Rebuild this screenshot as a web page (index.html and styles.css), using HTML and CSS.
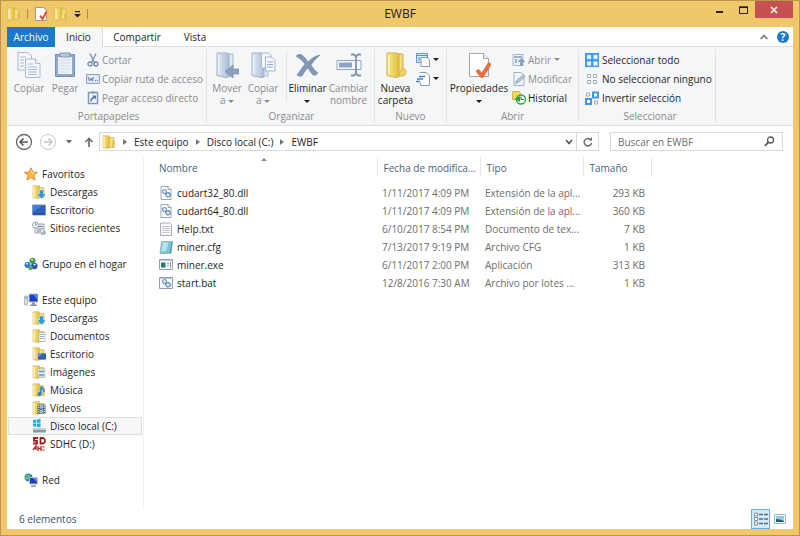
FILE: index.html
```
<!DOCTYPE html>
<html lang="es">
  <head>
    <meta charset="UTF-8" />
    <meta name="viewport" content="width=device-width, initial-scale=1.0" />
    <title>EWBF</title>
    <link rel="stylesheet" href="styles.css">
  </head>
  <body>
    <!-- Iconos compartidos -->
    <svg class="sprite" aria-hidden="true">
      <defs>
        <linearGradient id="gold" x1="0" x2="1"><stop offset="0" stop-color="#f8e994" /><stop offset="1" stop-color="#e3bd3a" /></linearGradient>
        <linearGradient id="steel" x1="0" x2="1"><stop offset="0" stop-color="#e3ebf5" /><stop offset="1" stop-color="#a9bcd6" /></linearGradient>
      </defs>
      <symbol id="folder" viewBox="0 0 14 14">
        <path d="M6 2.500h6v10H6z" fill="#f1dd82" stroke="#cdb04d" stroke-width=".6" />
        <path d="M1 .8h6.500v12l-1.500.8-5-1z" fill="url(#gold)" stroke="#d3b348" stroke-width=".6" />
        <path d="M2 2v10" stroke="#fff9d8" />
        <path d="M10.500 5.500h2v7h-2z" fill="#dcba4e" />
      </symbol>
      <symbol id="page" viewBox="0 0 14 14">
        <path d="M2 .5h7l3 3v10H2z" fill="#fff" stroke="#9aa5b1" />
        <path d="M9 .5v3h3" fill="#e8edf2" stroke="#9aa5b1" />
      </symbol>
      <symbol id="download" viewBox="0 0 14 14">
        <use href="#folder" />
        <path d="M7.500 5h4v4H14l-4.500 5L5 9h2.500z" fill="#3296dc" stroke="#fff" stroke-width=".4" />
      </symbol>
      <symbol id="gears" viewBox="0 0 14 14">
        <circle cx="5.500" cy="5.500" r="2" fill="#dce9f8" stroke="#5d86b8" stroke-width="1.200" stroke-dasharray="1.200 .3" />
        <circle cx="9" cy="8.800" r="2.200" fill="#dce9f8" stroke="#3e6aa3" stroke-width="1.200" stroke-dasharray="1.200 .3" />
      </symbol>
      <symbol id="dll" viewBox="0 0 14 14">
        <use href="#page" />
        <use href="#gears" />
      </symbol>
      <symbol id="monitor" viewBox="0 0 14 14">
        <path d="M5 1h9v8H5z" fill="#1c3fc0" stroke="#b8c3d4" />
        <path d="M9 1.500h4.500v5z" fill="#5d8bf0" />
        <path d="M8 9.500h3v2h2v1.500H6v-1.500h2z" fill="#8b97a8" />
      </symbol>
      <symbol id="big-folder" viewBox="0 0 24 26">
        <path d="M9 2h9v22H9z" fill="#dfe7f1" stroke="#a7b8ce" />
        <path d="M2 1h10q2 0 2 2v22l-3 .5-9-2z" fill="url(#steel)" stroke="#9fb3cf" />
        <path d="M4 3v19" stroke="#f4f8fc" />
      </symbol>
    </svg>

    <div class="window">
      <header class="titlebar">
        <div class="quick">
          <svg width="14" height="14"><use href="#folder" /></svg>
          <span class="divider"></span>
          <button aria-label="Propiedades"><svg width="14" height="14" viewBox="0 0 14 14"><path d="M1.500.5h8l3 3v10h-11z" fill="#fff" stroke="#a49a8c" /><path d="M6 8.500l2.500 3.500 4-7.500" fill="none" stroke="#e4512b" stroke-width="2" /></svg></button>
          <button aria-label="Nueva carpeta"><svg width="14" height="14"><use href="#folder" /></svg></button>
          <button aria-label="Personalizar"><svg width="7" height="7" viewBox="0 0 7 7"><path d="M1 0h5v1.200H1zM0 3h7L3.500 6.500z" fill="#222" /></svg></button>
          <span class="divider"></span>
        </div>
        <h1>EWBF</h1>
        <div class="controls">
          <button aria-label="Minimizar"><svg width="9" height="8" viewBox="0 0 9 8"><path d="M1 5h7v2H1z" fill="#222" /></svg></button>
          <button aria-label="Maximizar"><svg width="9" height="8" viewBox="0 0 9 8"><path d="M.5 1v6.500h8V1z" fill="none" stroke="#222" /><path d="M0 .5h9v1.500H0z" fill="#222" /></svg></button>
          <button class="close" aria-label="Cerrar"><svg width="8" height="8" viewBox="0 0 8 8"><path d="M1 1l6 6M7 1L1 7" stroke="#fff" stroke-width="1.600" /></svg></button>
        </div>
      </header>

      <nav class="tabs">
        <button class="file">Archivo</button>
        <button class="active">Inicio</button>
        <button class="wide">Compartir</button>
        <button>Vista</button>
        <div class="help">
          <button aria-label="Contraer la cinta"><svg width="8" height="6" viewBox="0 0 8 6"><path d="M.7 5L4 1.500 7.300 5" fill="none" stroke="#777" stroke-width="1.700" /></svg></button>
          <button class="question" aria-label="Ayuda">?</button>
        </div>
      </nav>

      <!-- Cinta de opciones -->
      <section class="ribbon">
        <div class="group clipboard">
          <div class="tools">
            <button class="big" disabled>
              <svg width="24" height="26" viewBox="0 0 24 26"><g fill="#f4f7fb" stroke="#a9bad1"><path d="M1 .5h10l3.500 3.500v14H1z" /><path d="M8.500 7h10l4.500 4.500v14H8.500z" /><path d="M18.500 7v4.500H23M3 5h6M3 8h4M3 11h4M3 14h4M11 12h5M11 15h9M11 17.500h9M11 20h9M11 22.500h9" /></g></svg>
              Copiar
            </button>
            <button class="big" disabled>
              <svg width="22" height="26" viewBox="0 0 22 26"><path d="M1.500 2.500h19v22h-19z" fill="#93a8c8" stroke="#7990b4" /><path d="M4 5h14v17H4z" fill="#eef3f9" /><path d="M6 1h10v4H6z" fill="#b8c7dc" stroke="#8096b8" /><path d="M5 8h12M5 11h12M5 14h12M5 17h12M5 20h8" stroke="#cfdae8" /></svg>
              Pegar
            </button>
            <div class="stack">
              <button disabled><svg width="14" height="14" viewBox="0 0 14 14"><path d="M4 .5l4.500 9M10 .5l-4.500 9" stroke="#8298b6" stroke-width="1.500" /><circle cx="4" cy="11" r="2" fill="none" stroke="#7189ab" stroke-width="1.300" /><circle cx="10" cy="11" r="2" fill="none" stroke="#7189ab" stroke-width="1.300" /></svg>Cortar</button>
              <button disabled><svg width="14" height="14" viewBox="0 0 14 14"><path d="M.5 2.500h13v9H.5z" fill="#dfe7f2" stroke="#8ea3c2" /><path d="M2 5l1.500 4L5 6l1 3 1.500-4M9 8.500h1M11 8.500h1" fill="none" stroke="#6480aa" /></svg>Copiar ruta de acceso</button>
              <button disabled><svg width="14" height="14" viewBox="0 0 14 14"><path d="M2.500 1.500h9v11h-9z" fill="#f6f9fc" stroke="#7f97ba" stroke-width="1.500" /><path d="M5 .5h4v2H5z" fill="#7f97ba" /><path d="M5 10.500c0-2.500 1-3.500 3-4" fill="none" stroke="#5575a6" stroke-width="1.400" /><path d="M6 4.500h4v4z" fill="#5575a6" /></svg>Pegar acceso directo</button>
            </div>
          </div>
          <h2>Portapapeles</h2>
        </div>

        <div class="group organize">
          <div class="tools">
            <button class="big" disabled>
              <svg width="24" height="26" viewBox="0 0 24 26"><use href="#big-folder" /><path d="M24 17v5h-6v4L10 19.500l8-6.500v4z" fill="#8da1bf" stroke="#788eaf" stroke-width=".7" /></svg>
              <span>Mover<br>a <i class="caret"></i></span>
            </button>
            <button class="big" disabled>
              <svg width="26" height="26" viewBox="0 0 26 26"><use href="#big-folder" width="24" height="26" /><path d="M11.500 1h7l3 3v12h-10z" fill="#f4f7fb" stroke="#a9bad1" /><path d="M15.500 5h6l3.500 3.500V19h-9.500z" fill="#f8fafd" stroke="#9fb3cf" /><path d="M17 10h6M17 12.500h6M17 15h6" stroke="#93aac9" /></svg>
              <span>Copiar<br>a <i class="caret"></i></span>
            </button>
            <span class="rule"></span>
            <button class="big">
              <svg width="26" height="26" viewBox="0 0 26 26"><path d="M1 4q3-3 6-1 4 3 6 7 5-6 12-7-6 5-9 10 3 5 7 8-2 3-5 2-3-3-5-7-4 4-6 8-3 1-5-1 4-6 8-11-4-5-9-8z" fill="#8297b6" stroke="#6f86a8" stroke-width=".5" /></svg>
              <span>Eliminar<br><i class="caret"></i></span>
            </button>
            <button class="big" disabled>
              <svg width="26" height="26" viewBox="0 0 26 26"><path d="M1 8.500h24v9H1z" fill="#f6f9fc" stroke="#8da2c0" /><path d="M3 10.500h13v5H3z" fill="#8da4c5" /><path d="M15 2.500h3l2 2 2-2h3M15 23.500h3l2-2 2 2h3M20 4v18" fill="none" stroke="#7f94b2" stroke-width="1.800" /></svg>
              <span>Cambiar<br>nombre</span>
            </button>
          </div>
          <h2>Organizar</h2>
        </div>

        <div class="group new">
          <div class="tools">
            <button class="big">
              <svg width="24" height="26" viewBox="0 0 24 26"><path d="M10 2h9v21h-9z" fill="#f1dc84" stroke="#cfaa3d" /><path d="M3 1h10q2 0 2 2v22l-3 .5-9-2z" fill="url(#gold)" stroke="#d5ae3e" /><path d="M5 3v19" stroke="#fffbe0" /><path d="M17 17q5-2 5 3t-6 4l-1-3q3 0 2-4" fill="#efd16a" stroke="#cfaa3d" stroke-width=".7" /></svg>
              <span>Nueva<br>carpeta</span>
            </button>
            <div class="stack">
              <button aria-label="Nuevo elemento"><svg width="14" height="14" viewBox="0 0 14 14"><path d="M.5.5h11v9H.5z" fill="#d9ebf9" stroke="#6596c4" /><path d="M1 2.500h10" stroke="#4d8fcd" /><path d="M5 4.500h6l2.500 2.500v6.500H5z" fill="#fff" stroke="#8c99a8" /><path d="M2 5h2M2 7h2" stroke="#4d8fcd" /></svg><i class="caret"></i></button>
              <button aria-label="Fácil acceso"><svg width="14" height="14" viewBox="0 0 14 14"><path d="M3.500.5h7l3 3v10h-9v-3" fill="#fff" stroke="#8c99a8" /><path d="M3 4.500h6M1 7h6M0 9.500h4" stroke="#4382cc" stroke-width="1.400" /></svg><i class="caret"></i></button>
            </div>
          </div>
          <h2>Nuevo</h2>
        </div>

        <div class="group open">
          <div class="tools">
            <button class="big">
              <svg width="24" height="26" viewBox="0 0 24 26"><path d="M2.500 1.500h14l5 5v18h-19z" fill="#fff" stroke="#a4a8ac" /><path d="M16.500 1.500v5h5" fill="#eceff1" stroke="#a4a8ac" /><path d="M10 18l5 6 8-13" fill="none" stroke="#e96f40" stroke-width="4" /></svg>
              <span>Propiedades<br><i class="caret"></i></span>
            </button>
            <div class="stack">
              <button disabled><svg width="14" height="14" viewBox="0 0 14 14"><path d="M1 1.500h10v11H1z" fill="#eef3f8" stroke="#a2b4cd" /><path d="M2 4h8M3 7h2M3 9h2" stroke="#869dbc" stroke-width="1.500" /><path d="M9.500 5l4 4H11v4H8V9H5.500z" fill="#8ba0be" /></svg>Abrir <i class="caret"></i></button>
              <button disabled><svg width="14" height="14" viewBox="0 0 14 14"><path d="M2 .5h7l3 3v10H2z" fill="#f2f6fa" stroke="#9fb1ca" /><path d="M3.500 11.500l1-3 7-6 1.500 2-6.500 6z" fill="#b4c6de" stroke="#849bbb" stroke-width=".7" /></svg>Modificar</button>
              <button><svg width="14" height="14" viewBox="0 0 14 14"><path d="M.5.500h7l1 2v6h-8z" fill="#f3d956" stroke="#c2a42c" stroke-width=".7" /><circle cx="9" cy="8.500" r="4.500" fill="#f3fbee" stroke="#3d9c43" stroke-width="1.300" /><path d="M9 5.500v3h3" fill="none" stroke="#34677c" /><path d="M2.500 8L8 5v6z" fill="#2da536" /></svg>Historial</button>
            </div>
          </div>
          <h2>Abrir</h2>
        </div>

        <div class="group select">
          <div class="tools">
            <div class="stack">
              <button><svg width="14" height="14" viewBox="0 0 14 14"><path d="M0 0h14v14H0z" fill="#3d98e8" /><path d="M2 2h4v4H2zM8.500 2h4v4h-4zM2 8.500h4v4H2zM8.500 8.500h4v4h-4z" fill="#eaf5ff" stroke="#a5d2f8" stroke-width=".6" /></svg>Seleccionar todo</button>
              <button><svg width="14" height="14" viewBox="0 0 14 14"><path d="M2.500 2.500h3v3h-3zM8.500 2.500h3v3h-3zM2.500 8.500h3v3h-3zM8.500 8.500h3v3h-3z" fill="#fff" stroke="#a4a9af" /></svg>No seleccionar ninguno</button>
              <button><svg width="14" height="14" viewBox="0 0 14 14"><path d="M1.500 2h3v3h-3zM9.500 10h3v3h-3z" fill="#fff" stroke="#a4a9af" /><path d="M8 1.500h5v5H8zM1 8h5v5H1z" fill="#fff" stroke="#3d98e8" stroke-width="2" /></svg>Invertir selección</button>
            </div>
          </div>
          <h2>Seleccionar</h2>
        </div>
      </section>

      <!-- Barra de direcciones -->
      <div class="addressbar">
        <div class="history">
          <button aria-label="Atrás"><svg width="18" height="18" viewBox="0 0 18 18"><circle cx="9" cy="9" r="7.500" fill="none" stroke="#6a6a6a" stroke-width="1.300" /><path d="M13 9H6M8.500 5.500L5 9l3.500 3.500" fill="none" stroke="#555" stroke-width="1.600" /></svg></button>
          <button aria-label="Adelante" disabled><svg width="18" height="18" viewBox="0 0 18 18"><circle cx="9" cy="9" r="7.500" fill="none" stroke="#c9c9c9" /><path d="M5 9h7M9.500 5.500L13 9l-3.500 3.500" fill="none" stroke="#c4c4c4" stroke-width="1.500" /></svg></button>
          <button class="recent" aria-label="Ubicaciones recientes"><svg width="6" height="4" viewBox="0 0 6 4"><path d="M0 0h6L3 3.500z" fill="#666" /></svg></button>
          <button aria-label="Subir"><svg width="10" height="10" viewBox="0 0 10 10"><path d="M5 10V2M1.500 5L5 1.500 8.500 5" fill="none" stroke="#6e6e6e" stroke-width="1.700" /></svg></button>
        </div>
        <div class="path">
          <svg width="14" height="14"><use href="#folder" /></svg>
          <i class="arrow"></i><a href="#">Este equipo</a>
          <i class="arrow"></i><a href="#">Disco local (C:)</a>
          <i class="arrow"></i><a href="#">EWBF</a>
          <button class="drop" aria-label="Ubicaciones anteriores"><svg width="8" height="6" viewBox="0 0 8 6"><path d="M1 1l3 3.500L7 1" fill="none" stroke="#555" stroke-width="1.600" /></svg></button>
          <button class="reload" aria-label="Actualizar"><svg width="10" height="10" viewBox="0 0 10 10"><path d="M8.500 6A3.700 3.700 0 1 1 7 2.200" fill="none" stroke="#666" stroke-width="1.400" /><path d="M5.500 3.500H9V0z" fill="#666" /></svg></button>
        </div>
        <div class="search">
          <input type="text" placeholder="Buscar en EWBF" aria-label="Buscar en EWBF" />
          <svg width="11" height="11" viewBox="0 0 11 11"><circle cx="6.500" cy="4" r="3" fill="none" stroke="#555" stroke-width="1.300" /><path d="M4.500 6L1 9.800" stroke="#555" stroke-width="1.800" /></svg>
        </div>
      </div>

      <main>
        <nav class="sidebar">
          <ul>
            <li><a href="#"><svg width="14" height="14" viewBox="0 0 14 14"><path d="M7 .8l1.800 4.200 4.700.4-3.600 3 1.200 4.700L7 10.600 2.900 13.100l1.200-4.700L.5 5.400 5.200 5z" fill="#fbb947" stroke="#dd7623" stroke-width=".8" /><path d="M7 3l1 3 3 .3" stroke="#ffe6a5" fill="none" /></svg>Favoritos</a>
              <ul>
                <li><a href="#"><svg width="14" height="14"><use href="#download" /></svg>Descargas</a></li>
                <li><a href="#"><svg width="14" height="14" viewBox="0 0 14 14"><path d="M.5 2h13v10H.5z" fill="#2c61bd" stroke="#7a97c6" /><path d="M1 2.500h9L1 9z" fill="#457ed2" /><path d="M1 11h12" stroke="#1b3d7c" /></svg>Escritorio</a></li>
                <li><a href="#"><svg width="14" height="14" viewBox="0 0 14 14"><path d="M3 3h9v9H3z" fill="#e3e8ed" stroke="#97a2ad" /><circle cx="3.500" cy="4" r="3" fill="#f5f8fa" stroke="#9aa6b1" /><path d="M3.500 2v2H5M6 5.500h5M5 8h6M5 10h4M9 13h4v-3" fill="none" stroke="#7f8d9b" /></svg>Sitios recientes</a></li>
              </ul>
            </li>
            <li><a href="#"><svg width="14" height="14" viewBox="0 0 14 14"><circle cx="8.500" cy="3.700" r="3" fill="#3c9b4c" /><circle cx="3.500" cy="8" r="3" fill="#3172cd" /><circle cx="10.300" cy="9" r="3.200" fill="#2b50b5" /><circle cx="6.500" cy="11" r="2.300" fill="#53ae55" /><path d="M7 2.500l2 .5M2 6.500l2 .5M9.500 7l2 1" stroke="#c9e6f4" stroke-width="1.500" /></svg>Grupo en el hogar</a></li>
            <li><a href="#"><svg width="14" height="14" viewBox="0 0 14 14"><use href="#monitor" /><path d="M.5 3h3v9h-3z" fill="#dbe0e6" stroke="#98a2ae" stroke-width=".7" /><path d="M1 5h2" stroke="#4aa650" /></svg>Este equipo</a>
              <ul>
                <li><a href="#"><svg width="14" height="14"><use href="#download" /></svg>Descargas</a></li>
                <li><a href="#"><svg width="14" height="14" viewBox="0 0 14 14"><use href="#folder" /><path d="M7 3.500h6v9H7z" fill="#fff" stroke="#9eabb9" stroke-width=".7" /><path d="M8 5.500h4M8 7.500h4M8 9.500h4" stroke="#98acc0" /></svg>Documentos</a></li>
                <li><a href="#"><svg width="14" height="14" viewBox="0 0 14 14"><use href="#folder" /><path d="M6 6.500h8v6H6z" fill="#2f63ad" /><path d="M6 6.500h5L6 10z" fill="#6b99d6" /></svg>Escritorio</a></li>
                <li><a href="#"><svg width="14" height="14" viewBox="0 0 14 14"><use href="#folder" /><path d="M6 4h7v8H6z" fill="#eff8fe" stroke="#93aec2" stroke-width=".7" /><path d="M7 6.500h5M7 10h5" stroke="#5294c4" stroke-width="1.500" /></svg>Imágenes</a></li>
                <li><a href="#"><svg width="14" height="14" viewBox="0 0 14 14"><use href="#folder" /><path d="M9 11V3.500c1 2.500 4 2 3 5.500" fill="none" stroke="#2181d3" stroke-width="1.500" /><circle cx="7.500" cy="11" r="2" fill="#2181d3" /></svg>Música</a></li>
                <li><a href="#"><svg width="14" height="14" viewBox="0 0 14 14"><use href="#folder" /><path d="M5.500 3.500h8v9h-8z" fill="#4e5d68" /><path d="M7.500 4h4v3.500h-4zM7.500 8.500h4V12h-4z" fill="#91bddb" /><path d="M6.500 4v8M12.500 4v8" stroke="#e7ebee" stroke-dasharray="1 1" /></svg>Vídeos</a></li>
                <li><a href="#" class="selected"><svg width="14" height="14" viewBox="0 0 14 14"><path d="M1 1l3-.4v3.200H1zM4.700.5L8.500 0v3.800H4.700zM1 4.500h3v3.200l-3-.4zM4.700 4.500h3.800v3.800L4.700 7.800z" fill="#22a9e6" /><path d="M1 9h11l2 2v2.500H1z" fill="#8797a5" /><path d="M1 9h11l2 2H1z" fill="#c3ced7" /><path d="M11 12.300h2" stroke="#51db63" /></svg>Disco local (C:)</a></li>
                <li><a href="#"><svg width="14" height="14" viewBox="0 0 14 14"><path d="M6 1H2v2.800h3v2.700H1M8.500 1v5.500h2.500q2-.5 2-2.700T11 1z" fill="none" stroke="#9d1e1e" stroke-width="1.800" /><path d="M1 13l3-4v4M6 9v5M9 9v5M6 11.500h3" fill="none" stroke="#b32424" stroke-width="1.300" /><path d="M10.500 9h2v2h-2zM10.500 12h2v2h-2z" fill="#eb8060" /></svg>SDHC (D:)</a></li>
              </ul>
            </li>
            <li><a href="#"><svg width="14" height="14" viewBox="0 0 14 14"><circle cx="4.500" cy="4.500" r="4" fill="#3189c9" /><path d="M2 2.500l4-1-1 3-2 3-2-2z" fill="#66bf66" /><path d="M5.500 4.500h8v6.500h-8z" fill="#1c3fc0" stroke="#b8c3d4" /><path d="M9 5h4v4z" fill="#5d8bf0" /><path d="M7 13h5" stroke="#8b97a8" stroke-width="1.500" /></svg>Red</a></li>
          </ul>
        </nav>

        <div class="files">
          <table>
            <colgroup>
              <col class="col-name" />
              <col class="col-date" />
              <col class="col-type" />
              <col class="col-size" />
            </colgroup>
            <thead>
              <tr>
                <th class="sorted">Nombre</th>
                <th>Fecha de modifica...</th>
                <th>Tipo</th>
                <th>Tamaño</th>
              </tr>
            </thead>
            <tbody>
              <tr>
                <td><svg width="14" height="14"><use href="#dll" /></svg>cudart32_80.dll</td>
                <td>1/11/2017 4:09 PM</td>
                <td>Extensión de la apl...</td>
                <td>293 KB</td>
              </tr>
              <tr>
                <td><svg width="14" height="14"><use href="#dll" /></svg>cudart64_80.dll</td>
                <td>1/11/2017 4:09 PM</td>
                <td>Extensión de la apl...</td>
                <td>360 KB</td>
              </tr>
              <tr>
                <td><svg width="14" height="14" viewBox="0 0 14 14"><path d="M1.500 1h9l2 2v10.500h-11z" fill="#f8f9fa" stroke="#a8aeb4" /><path d="M3 4.500h8M3 6.500h8M3 8.500h8M3 10.500h8" stroke="#c4cbd2" /></svg>Help.txt</td>
                <td>6/10/2017 8:54 PM</td>
                <td>Documento de tex...</td>
                <td>7 KB</td>
              </tr>
              <tr>
                <td><svg width="14" height="14" viewBox="0 0 14 14"><path d="M2.500 1.500h11l-1.500 12H1z" fill="#79c4d2" stroke="#90aeb5" stroke-width=".8" /><path d="M3.500 2.500h6l-2 8-5 1.500z" fill="#b5e4eb" /><path d="M13 2l-1.500 11" stroke="#4a9cab" /></svg>miner.cfg</td>
                <td>7/13/2017 9:19 PM</td>
                <td>Archivo CFG</td>
                <td>1 KB</td>
              </tr>
              <tr>
                <td><svg width="14" height="14" viewBox="0 0 14 14"><path d="M.5 1.500h13v10H.5z" fill="#f8fafb" stroke="#94a2af" /><path d="M1 2.500h12" stroke="#c1ccd6" /><path d="M2 4.500h4.500v5H2z" fill="#287a73" /><path d="M8 5.500h2M8 7.500h2" stroke="#8da8b9" /><path d="M11.500 4v6" stroke="#8498a9" /></svg>miner.exe</td>
                <td>6/11/2017 2:00 PM</td>
                <td>Aplicación</td>
                <td>313 KB</td>
              </tr>
              <tr>
                <td><svg width="14" height="14" viewBox="0 0 14 14"><path d="M.5 1.500h13v11H.5z" fill="#f4f7fa" stroke="#8f9cab" /><path d="M1 2.500h12" stroke="#bac8d8" /><use href="#gears" /></svg>start.bat</td>
                <td>12/8/2016 7:30 AM</td>
                <td>Archivo por lotes ...</td>
                <td>1 KB</td>
              </tr>
            </tbody>
          </table>
        </div>
      </main>

      <footer class="status">
        <span>6 elementos</span>
        <div class="views">
          <button class="on" aria-label="Detalles"><svg width="14" height="14" viewBox="0 0 14 14"><path d="M.5 1h3v3h-3zM.5 5.500h3v3h-3zM.5 10h3v3h-3z" fill="#fff" stroke="#8c8c9c" /><path d="M5 2.500h4M10 2.500h4M5 7h4M10 7h4M5 11.500h4M10 11.500h4" stroke="#566b7d" stroke-width="1.300" /></svg></button>
          <button aria-label="Iconos grandes"><svg width="14" height="14" viewBox="0 0 14 14"><path d="M1.500 2.500h11v9h-11z" fill="#fff" stroke="#9fb4c2" /><path d="M3 4h8v6H3z" fill="#92cbe3" /><path d="M3 7q4 0 8 2v1H3z" fill="#225e72" /></svg></button>
        </div>
      </footer>
    </div>
  </body>
</html>
```
FILE: styles.css
```
* {
  box-sizing: border-box;
}

body {
  margin: 0;
  font-family: "Open Sans", "Noto Sans", sans-serif;
  font-size: 10px;
  line-height: 12px;
  color: #1e1e1e;
}

button {
  display: flex;
  align-items: center;
  margin: 0;
  padding: 0;
  border: none;
  background: none;
  font: inherit;
  color: inherit;
  white-space: nowrap;
}

a {
  color: inherit;
  text-decoration: none;
}

h1,
h2,
ul {
  margin: 0;
  padding: 0;
  font-weight: normal;
  list-style: none;
}

svg {
  display: block;
  flex: none;
}

.sprite {
  position: absolute;
  width: 0;
  height: 0;
}

.window {
  display: flex;
  flex-direction: column;
  min-height: 100vh;
  padding: 0 6px 6px;
  border: 1px solid #b9974b;
  background: #f0c869;
}

/* Barra de título */
.titlebar {
  display: grid;
  grid-template-columns: 1fr auto 1fr;
  height: 26px;
}

.titlebar h1 {
  align-self: center;
  font-size: 12px;
  line-height: 16px;
}

.quick {
  display: flex;
  align-items: center;
  gap: 6px;
}

.divider {
  width: 1px;
  height: 10px;
  background: #a88d55;
}

.controls {
  display: flex;
  justify-content: flex-end;
}

.controls button {
  justify-content: center;
  width: 24px;
  height: 17px;
}

.controls .close {
  width: 38px;
  background: #c75050;
}

/* Pestañas */
.tabs {
  display: flex;
  height: 20px;
  background: #fff;
  border-bottom: 1px solid #dcdddf;
}

.tabs > button {
  justify-content: center;
  width: 48px;
  height: 20px;
}

.tabs > .file {
  background: #1979ca;
  color: #fff;
}

.tabs > .active {
  border-right: 1px solid #dcdddf;
  background: #f5f6f7;
}

.tabs > .wide {
  width: 68px;
}

.help {
  display: flex;
  align-items: center;
  gap: 9px;
  margin-left: auto;
  padding-right: 4px;
}

.question {
  justify-content: center;
  width: 12px;
  height: 12px;
  border-radius: 50%;
  background: #1979ca;
  color: #fff;
  font-weight: bold;
}

/* Cinta */
.ribbon {
  display: flex;
  height: 79px;
  background: #f5f6f7;
  border-bottom: 1px solid #dcdddf;
}

.group {
  display: flex;
  flex-direction: column;
  justify-content: space-between;
  margin: 2px 0 3px;
  border-right: 1px solid #e0e2e4;
}

.group h2 {
  color: #8c8c8c;
  font-size: 10px;
  line-height: 12px;
  text-align: center;
}

.tools {
  display: flex;
  align-items: flex-start;
  padding-top: 1px;
}

.clipboard {
  width: 200px;
  padding-left: 4px;
}

.organize {
  width: 168px;
  padding-left: 2px;
}

.new {
  width: 72px;
}

.open {
  width: 132px;
}

.select {
  width: 137px;
  padding-left: 6px;
}

.big {
  flex-direction: column;
  width: 36px;
  gap: 4px;
  padding-top: 2px;
}

.new .big,
.organize .rule ~ .big {
  width: 41px;
}

.open .big {
  width: 64px;
}

button:disabled {
  color: #8c8c8c;
}

.caret {
  display: inline-block;
  border: 3px solid transparent;
  border-top: 3px solid currentColor;
  border-bottom: 0;
  vertical-align: middle;
}

.stack .caret {
  margin-left: 1px;
}

.rule {
  width: 1px;
  height: 50px;
  margin: 2px 0 0 5px;
  background: #e0e2e4;
}

.stack button {
  gap: 2px;
  height: 19px;
}

.clipboard .stack {
  padding-left: 3px;
}

.open .stack {
  padding-left: 1px;
}

.select .stack button {
  gap: 3px;
}

/* Direcciones */
.addressbar {
  display: flex;
  align-items: center;
  padding: 6px 10px 5px 8px;
}

.history {
  display: flex;
  align-items: center;
  gap: 6px;
  width: 84px;
}

.recent {
  padding: 0 6px 0 3px;
}

.path {
  display: flex;
  align-items: center;
  flex: 1;
  height: 19px;
  padding-left: 2px;
  border: 1px solid #d9d9d9;
}

.arrow {
  margin: 0 7px;
  border: 3px solid transparent;
  border-left: 4px solid #777;
  border-right: 0;
}

.drop {
  margin-left: auto;
}

.reload {
  justify-content: center;
  width: 22px;
  height: 17px;
  margin-left: 3px;
  border-left: 1px solid #d9d9d9;
}

.search {
  display: flex;
  align-items: center;
  width: 173px;
  height: 19px;
  margin-left: 11px;
  padding: 0 7px;
  border: 1px solid #d9d9d9;
}

.search input {
  flex: 1;
  min-width: 0;
  padding: 0;
  border: none;
  outline: none;
  font: inherit;
}

.search input::placeholder {
  color: #6d6d6d;
}

.addressbar,
main,
.status {
  background: #fff;
}

main {
  display: flex;
  flex: 1;
}

/* Panel de navegación */
.sidebar {
  width: 137px;
  padding: 9px 1px 0;
  border-right: 1px solid #f2f2f2;
}

.sidebar > ul > li {
  margin-bottom: 18px;
}

.sidebar a {
  display: flex;
  align-items: center;
  gap: 4px;
  height: 18px;
  padding-left: 16px;
}

.sidebar ul ul a {
  padding-left: 24px;
}

.sidebar ul ul .selected {
  padding-left: 23px;
  border: 1px solid #dedede;
  background: #f7f7f7;
}

/* Lista de archivos */
.files {
  flex: 1;
  padding: 1px 0 0 9px;
}

table {
  table-layout: fixed;
  width: 498px;
  border-collapse: collapse;
}

.col-name {
  width: 224px;
}

.col-date,
.col-type {
  width: 103px;
}

.col-size {
  width: 68px;
}

th {
  position: relative;
  height: 19px;
  padding: 2px 5px 0 6px;
  border-right: 1px solid #e3e8ee;
  color: #4c607a;
  font-weight: normal;
  text-align: left;
  white-space: nowrap;
}

/* Flecha de orden */
.sorted::after {
  content: "";
  position: absolute;
  top: 1px;
  left: 108px;
  border: 3px solid transparent;
  border-top: 0;
  border-bottom: 3px solid #6b8ba8;
}

tbody::before {
  content: "";
  display: block;
  height: 8px;
}

td {
  height: 18px;
  padding: 0 6px 0 5px;
  color: #6d6d6d;
  white-space: nowrap;
}

td:first-child {
  display: flex;
  align-items: center;
  gap: 4px;
  padding-left: 6px;
  color: #1e1e1e;
}

td:last-child {
  text-align: right;
}

/* Barra de estado */
.status {
  display: flex;
  align-items: center;
  justify-content: space-between;
  height: 20px;
  padding: 0 6px 0 12px;
  color: #35506b;
}

.views {
  display: flex;
  gap: 3px;
}

.views .on {
  justify-content: center;
  width: 19px;
  height: 20px;
  border: 1px solid #66b2d6;
  background: #d1ecf8;
}
```
